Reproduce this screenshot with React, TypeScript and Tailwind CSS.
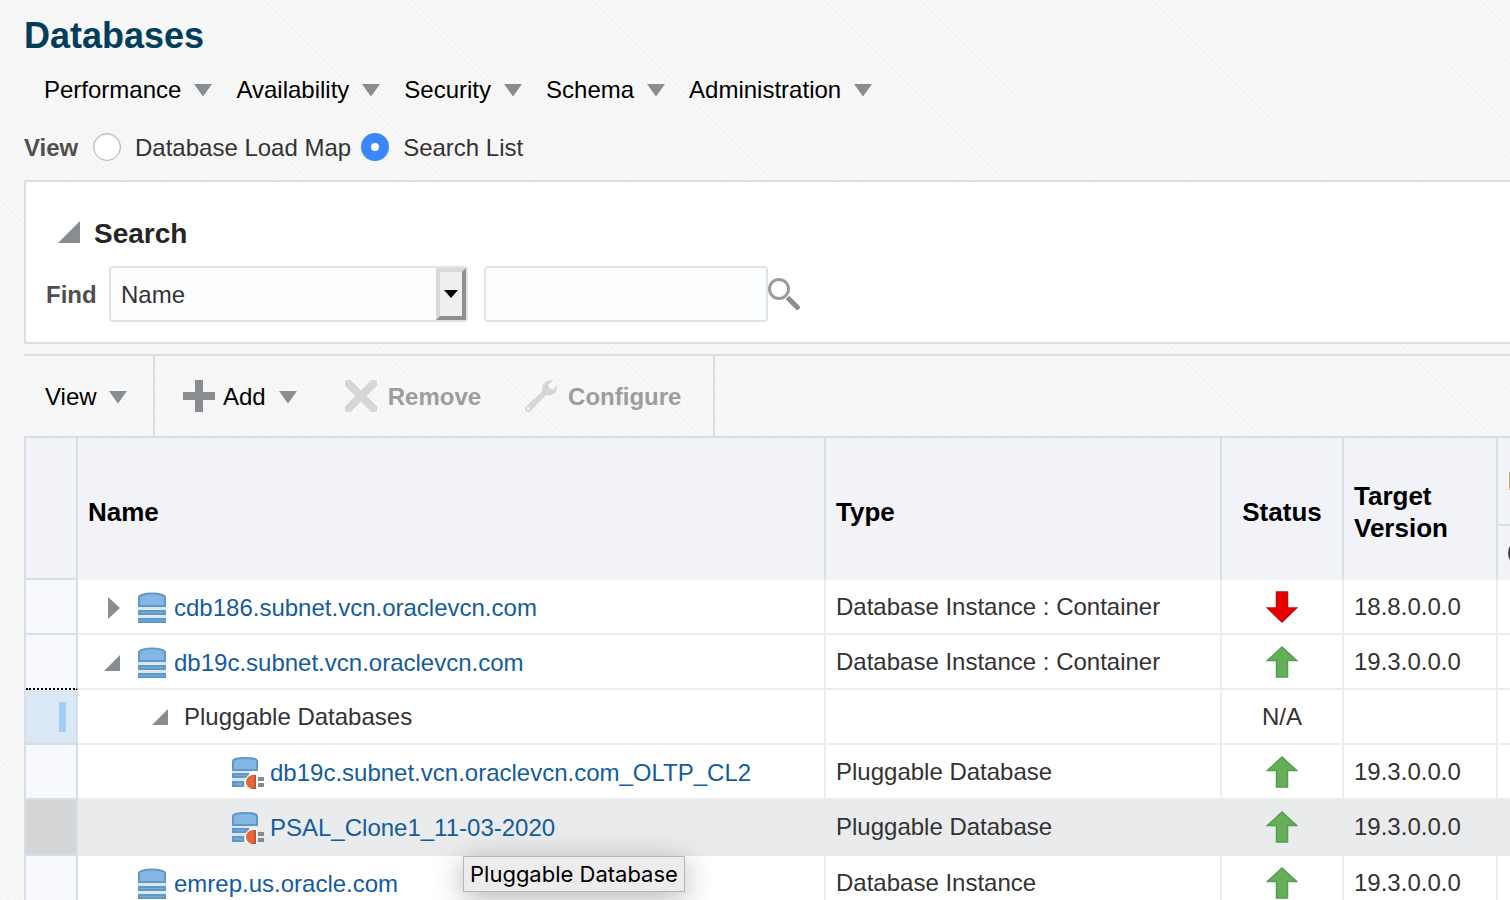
import React from 'react';

function Caret() {
  return (
    <svg className="h-3 w-[18px] shrink-0" viewBox="0 0 18 12" aria-hidden="true">
      <path d="M0 0h18L9 12.500z" fill="#878d91" />
    </svg>
  );
}

function Expanded({ large = false }: { large?: boolean }) {
  return (
    <svg className={large ? 'size-[22px] shrink-0' : 'size-4 shrink-0'} viewBox="0 0 16 16" aria-hidden="true">
      <path d="M16 0v16H0z" fill="#878d91" />
    </svg>
  );
}

function Collapsed() {
  return (
    <svg className="h-[22px] w-3 shrink-0" viewBox="0 0 12 22" aria-hidden="true">
      <path d="M0 0l12 11L0 22z" fill="#878d91" />
    </svg>
  );
}

function DatabaseIcon() {
  return (
    <svg className="size-8 shrink-0" viewBox="0 0 32 32" aria-hidden="true">
      <path d="M2 14h28v17H2z" fill="#dbe6f0" />
      <path d="M3 14V5c0-1.500 5-3.500 13-3.500S29 3.500 29 5v9z" fill="#84b7e6" stroke="#6098c8" strokeWidth="2" />
      <path d="M3 19h26v3H3zM3 27h26v3H3z" fill="#74aadd" stroke="#6098c8" strokeWidth="2" />
    </svg>
  );
}

function PluggableIcon() {
  return (
    <svg className="size-8 shrink-0" viewBox="0 0 32 32" aria-hidden="true">
      <path d="M0 14h18l-5 16H0z" fill="#dbe6f0" />
      <path d="M1 13V4c0-1.500 4-3 12-3s12 1.500 12 3v9z" fill="#84b7e6" stroke="#6098c8" strokeWidth="2" />
      <path d="M1 17h15v3H1zM1 25h10v4H1z" fill="#74aadd" stroke="#6098c8" strokeWidth="2" />
      <path d="M25 16h-3c-6 1-9 5-9 9 0 3 1 5 3 7h9z" fill="#fff" />
      <path d="M24 18v14h-4c-4-1-6-4-6-7s2-6 6-7z" fill="#e4683a" />
      <path d="M22 18h2v14h-5l3-2z" fill="#c9512b" />
      <path d="M26 20h6v4h-6zM26 26h6v4h-6z" fill="#858c92" />
    </svg>
  );
}

function StatusArrow({ up }: { up: boolean }) {
  return up ? (
    <svg className="inline-block size-8" viewBox="0 0 32 32" role="img" aria-label="Up">
      <path d="M16 1L30.500 14.500H21.500V31h-11V14.500H1.500z" fill="#67ae5b" stroke="#52a04c" strokeWidth="1.500" />
    </svg>
  ) : (
    <svg className="inline-block size-8" viewBox="0 0 32 32" role="img" aria-label="Down">
      <path d="M16 31L1.500 17h9V1h11v16h9z" fill="#e60000" stroke="#c40a0a" strokeWidth="1.500" />
    </svg>
  );
}

const menus = ['Performance', 'Availability', 'Security', 'Schema', 'Administration'];

type Row = {
  name: string;
  type: string;
  status: 'up' | 'down' | 'na';
  version: string;
  kind: 'closed' | 'open' | 'group' | 'pdb' | 'leaf';
  hovered?: boolean;
};

const rows: Row[] = [
  { name: 'cdb186.subnet.vcn.oraclevcn.com', type: 'Database Instance : Container', status: 'down', version: '18.8.0.0.0', kind: 'closed' },
  { name: 'db19c.subnet.vcn.oraclevcn.com', type: 'Database Instance : Container', status: 'up', version: '19.3.0.0.0', kind: 'open' },
  { name: 'Pluggable Databases', type: '', status: 'na', version: '', kind: 'group' },
  { name: 'db19c.subnet.vcn.oraclevcn.com_OLTP_CL2', type: 'Pluggable Database', status: 'up', version: '19.3.0.0.0', kind: 'pdb' },
  { name: 'PSAL_Clone1_11-03-2020', type: 'Pluggable Database', status: 'up', version: '19.3.0.0.0', kind: 'pdb', hovered: true },
  { name: 'emrep.us.oracle.com', type: 'Database Instance', status: 'up', version: '19.3.0.0.0', kind: 'leaf' },
];

function NameCell({ row }: { row: Row }) {
  if (row.kind === 'group') {
    return (
      <div className="flex items-center gap-4 pl-[74px]">
        <button type="button" aria-label="Collapse"><Expanded /></button>
        <span>{row.name}</span>
      </div>
    );
  }
  if (row.kind === 'pdb') {
    return (
      <div className="flex items-center gap-1.5 pt-0.5 pl-[154px]">
        <PluggableIcon />
        <a href="#" className="text-[#145c9e]">{row.name}</a>
      </div>
    );
  }
  return (
    <div className="flex items-center pt-0.5 pl-[26px]">
      <span className="flex w-8 shrink-0">
        {row.kind === 'closed' && <button type="button" aria-label="Expand" className="pl-1"><Collapsed /></button>}
        {row.kind === 'open' && <button type="button" aria-label="Collapse"><Expanded /></button>}
      </span>
      <DatabaseIcon />
      <a href="#" className="pl-1.5 text-[#145c9e]">{row.name}</a>
    </div>
  );
}

export default function App() {
  return (
    <div className="h-screen overflow-hidden bg-[#f7f7f7] bg-[repeating-linear-gradient(45deg,#f8f8f8_0px,#f8f8f8_2px,#f2f2f2_3px,#f8f8f8_4px)] pl-6 font-['Liberation_Sans',Arial,sans-serif] text-2xl text-[#333]">
      <h1 className="pt-4 text-4xl leading-10 font-bold text-[#003e5c]">Databases</h1>

      <nav className="flex gap-6 pt-[18px] pl-5 text-black">
        {menus.map((m) => (
          <button key={m} type="button" className="flex items-center gap-[13px] leading-8">
            {m}
            <Caret />
          </button>
        ))}
      </nav>

      <div role="radiogroup" aria-labelledby="view-label" className="flex items-center pt-6">
        <span id="view-label" className="w-[69px] pt-0.5 font-bold text-[#4f4f4f]">View</span>
        <label className="flex items-center gap-3.5">
          <input type="radio" name="view" className="size-7 appearance-none rounded-full border border-[#b0b0b0] bg-white shadow-[inset_0_1px_2px_#ddd] checked:border-[10px] checked:border-[#3b87fd]" />
          <span className="pt-0.5">Database Load Map</span>
        </label>
        <label className="flex items-center gap-3.5 pl-2.5">
          <input type="radio" name="view" defaultChecked className="size-7 appearance-none rounded-full border border-[#b0b0b0] bg-white checked:border-[10px] checked:border-[#3b87fd]" />
          <span className="pt-0.5">Search List</span>
        </label>
      </div>

      <section className="mt-4 rounded-l-xs border-2 border-r-0 border-[#d6dfe6] bg-white pt-8 pb-5 pl-5">
        <div className="flex items-center gap-3.5 pl-3">
          <button type="button" aria-label="Collapse search" className="mb-1"><Expanded large /></button>
          <h2 className="text-[28px] leading-10 font-bold text-[#252525]">Search</h2>
        </div>
        <div className="flex items-center pt-3">
          <label htmlFor="field" className="w-[63px] pt-0.5 font-bold text-[#4f4f4f]">Find</label>
          <div className="relative w-[359px]">
            <select id="field" className="h-14 w-full appearance-none rounded-sm border-2 border-[#dfe4e7] bg-[#fcfdff] px-2.5 pt-0.5 text-[#333]">
              <option>Name</option>
            </select>
            <span className="pointer-events-none absolute inset-y-0.5 right-0.5 flex w-[30px] items-center justify-center border-4 border-t-[#d9d9d9] border-r-[#8f8f8f] border-b-[#8f8f8f] border-l-[#d9d9d9] bg-[#efefef]">
              <svg className="h-2 w-3.5" viewBox="0 0 14 8" aria-hidden="true"><path d="M0 0h14L7 8z" fill="#000" /></svg>
            </span>
          </div>
          <input type="text" aria-label="Search value" className="ml-4 h-14 w-[284px] rounded-sm border-2 border-[#dfe4e7] bg-[#fcfdff] px-2.5" />
          <button type="button" aria-label="Run search">
            <svg className="size-8" viewBox="0 0 32 32" aria-hidden="true">
              <circle cx="11" cy="11" r="9.500" fill="none" stroke="#969b9e" strokeWidth="3" />
              <path d="M19.500 19.500L31 31" stroke="#878d91" strokeWidth="5" />
            </svg>
          </button>
        </div>
      </section>

      <div className="mt-2.5 flex h-[82px] items-stretch border-t-2 border-[#d6dfe6] text-black" role="toolbar">
        <div className="flex w-[131px] border-r-2 border-[#d6dfe6] pt-0.5 pl-[21px]">
          <button type="button" className="flex items-center gap-3">View<Caret /></button>
        </div>
        <div className="flex border-r-2 border-[#d6dfe6] pr-8 pl-7">
          <button type="button" className="flex items-center">
            <svg className="mr-2 size-8" viewBox="0 0 32 32" aria-hidden="true"><path d="M12 0h8v12h12v8H20v12h-8V20H0v-8h12z" fill="#878d91" /></svg>
            <span className="flex items-center gap-[13px] pt-0.5">Add<Caret /></span>
          </button>
          <button type="button" disabled className="ml-12 flex items-center gap-[11px] font-bold text-[#9d9d9d]">
            <svg className="size-8" viewBox="0 0 32 32" aria-hidden="true"><path d="M3.500 3.500l25 25M28.500 3.500l-25 25" stroke="#d5d6d8" strokeWidth="8" strokeLinecap="round" /></svg>
            <span className="pt-0.5">Remove</span>
          </button>
          <button type="button" disabled className="ml-11 flex items-center gap-[11px] font-bold text-[#9d9d9d]">
            <svg className="size-8" viewBox="0 0 32 32" aria-hidden="true">
              <path d="M28.500 .8C23-1.200 17 3 17.200 9c.1 1.500-.2 2.500-1.200 3.500L1.500 26c-2 2-1.800 4-.5 5.200s3.500 1 5-.7L20 16c1-1 2-1 3.500-.8C29 15.500 33 11 31.800 5.500L28.500 9.500l-4-1-1.500-4z" fill="#d5d6d8" />
              <circle cx="3.500" cy="28.500" r="1.500" fill="#f7f7f7" />
            </svg>
            <span className="pt-0.5">Configure</span>
          </button>
        </div>
      </div>

      <div className="overflow-hidden">
        <table className="w-full min-w-[1600px] table-fixed border-separate border-spacing-0 border-l-2 border-[#d6dfe6] bg-white">
          <colgroup>
            <col className="w-[52px]" />
            <col className="w-[748px]" />
            <col className="w-[396px]" />
            <col className="w-[122px]" />
            <col className="w-[154px]" />
            <col />
          </colgroup>
          <thead className="bg-[#f2f3f8] text-left text-[26px] leading-8 text-black [&_th]:border-t-2 [&_th]:border-r-2 [&_th]:border-[#d6dfe6]">
            <tr className="h-[88px]">
              <th rowSpan={2} aria-label="Select" className="border-b-2" />
              <th rowSpan={2} className="px-2.5 pt-1.5">Name</th>
              <th rowSpan={2} className="px-2.5 pt-1.5">Type</th>
              <th rowSpan={2} className="pt-1.5 text-center">Status</th>
              <th rowSpan={2} className="px-2.5 pt-1.5">Target Version</th>
              <th className="px-2.5">Incidents</th>
            </tr>
            <tr className="h-14">
              <th className="px-2.5"><span className="block size-7 rounded-full bg-[#444]" /></th>
            </tr>
          </thead>
          <tbody>
            {rows.map((row) => (
              <tr
                key={row.name}
                className={
                  row.hovered
                    ? 'h-14 bg-[#eaebec] [&>td]:border-r-2 [&>td]:border-b-2 [&>td]:border-[#e8eaeb]'
                    : 'h-[55px] [&>td]:border-r-2 [&>td]:border-b-2 [&>td]:border-[#ebedee]'
                }
              >
                <th
                  scope="row"
                  className={
                    row.hovered
                      ? 'border-r-2 border-b-2 border-[#d6dfe6] bg-[#d5d6d7]'
                      : row.kind === 'group'
                        ? 'border-r-2 border-b-2 border-[#d6dfe6] bg-[#dae8f5]'
                        : row.kind === 'open'
                          ? 'border-r-2 border-b-2 border-r-[#d6dfe6] border-b-black bg-[#f8f9fe] [border-bottom-style:dotted]'
                          : 'border-r-2 border-b-2 border-[#d6dfe6] bg-[#f8f9fe]'
                  }
                >
                  {row.kind === 'group' && <span className="mr-2.5 ml-auto block h-[30px] w-[7px] bg-[#a2cdf9]" />}
                </th>
                <td className="relative">
                  <NameCell row={row} />
                  {row.hovered && (
                    <span role="tooltip" className="absolute top-14 left-[385px] z-10 border border-[#b6b6b6] bg-[#ececec] px-1.5 font-[Inter,sans-serif] text-[22px] leading-[34px] whitespace-nowrap text-black shadow-[0_6px_30px_rgba(0,0,0,0.3)]">
                      Pluggable Database
                    </span>
                  )}
                </td>
                <td className="pl-2.5">{row.type}</td>
                <td className="text-center leading-none">
                  {row.status === 'na' ? 'N/A' : <StatusArrow up={row.status === 'up'} />}
                </td>
                <td className="pl-2.5">{row.version}</td>
                <td />
              </tr>
            ))}
          </tbody>
        </table>
      </div>
    </div>
  );
}
